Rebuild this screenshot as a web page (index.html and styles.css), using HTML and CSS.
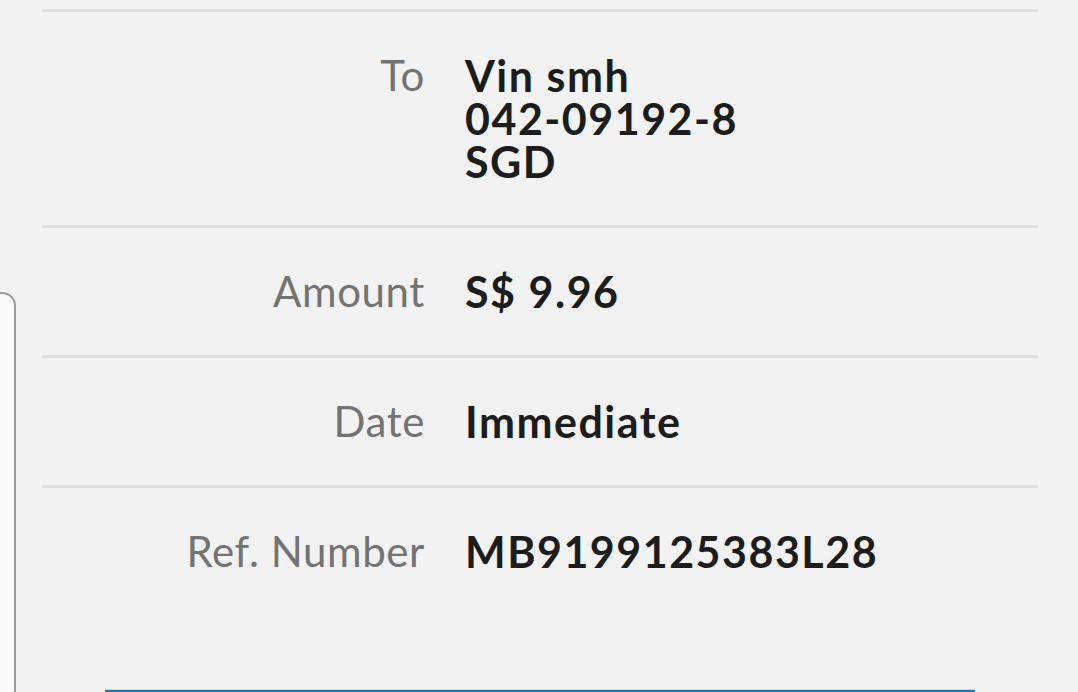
FILE: index.html
```html
<!DOCTYPE html>
<html lang="en">
<head>
  <meta charset="UTF-8">
  <meta name="viewport" content="width=device-width, initial-scale=1.0">
  <title>Transfer Details</title>
  <link rel="stylesheet" href="styles.css">
</head>
<body>
  <!-- card peeking in from the left -->
  <div class="side-card"></div>

  <div class="details">
    <div class="row">
      <div class="label">To</div>
      <div class="value">Vin smh<br>042-09192-8<br>SGD</div>
    </div>
    <div class="row">
      <div class="label">Amount</div>
      <div class="value">S$ 9.96</div>
    </div>
    <div class="row">
      <div class="label">Date</div>
      <div class="value">Immediate</div>
    </div>
    <div class="row">
      <div class="label">Ref. Number</div>
      <div class="value">MB9199125383L28</div>
    </div>
  </div>

  <button class="done" type="button" aria-label="Done"></button>
</body>
</html>
```

FILE: styles.css
```css
html, body {
  height: 100%;
}
body {
  margin: 0;
  background: #f2f2f2;
  font-family: Lato, "Open Sans", sans-serif;
  overflow: hidden;
  position: relative;
}
.side-card {
  position: absolute;
  left: -30px;
  top: 292px;
  width: 42px;
  height: 500px;
  background: #fafafa;
  border: 2px solid #9c9c9c;
  border-radius: 14px;
}
.details {
  margin: 0 40px 0 42px;
  padding-top: 9px;
}
.row {
  display: grid;
  grid-template-columns: 383px 1fr;
  column-gap: 40px;
  padding: 42px 0;
  border-top: 3px solid #e0e0e0;
  line-height: 43px;
}
.label {
  text-align: right;
  color: #737373;
  font-size: 42px;
  font-weight: 400;
  letter-spacing: 0.6px;
}
.value {
  color: #1c1c1c;
  font-size: 43px;
  font-weight: 700;
  letter-spacing: 1.5px;
}
.done {
  display: block;
  margin: 74px 0 0 105px;
  width: 870px;
  height: 60px;
  border: none;
  border-top: 1px solid #9fe3f5;
  background: #1878b6;
}
```
